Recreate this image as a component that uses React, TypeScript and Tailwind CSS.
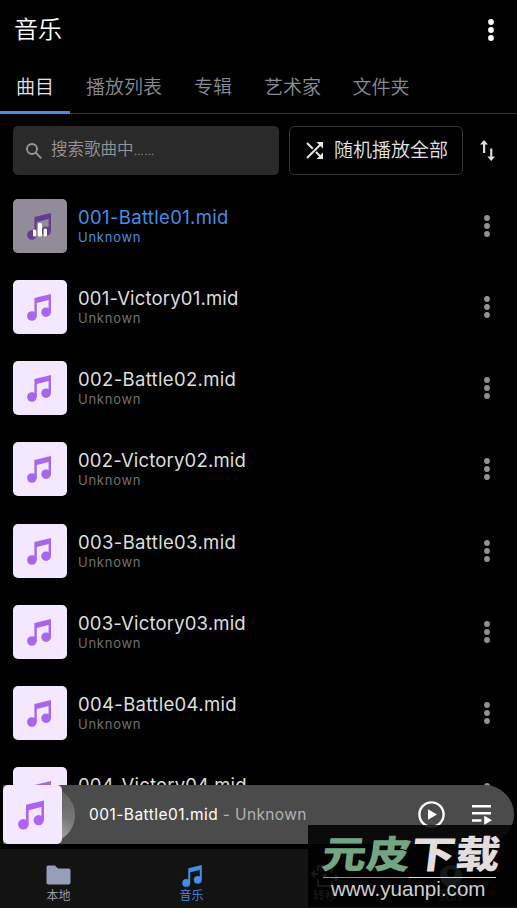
const tabs = [
  { label: "曲目", width: "w-[70px]" },
  { label: "播放列表", width: "w-[108px]" },
  { label: "专辑", width: "w-[70px]" },
  { label: "艺术家", width: "w-[89px]" },
  { label: "文件夹", width: "w-[88px]" },
];

const tracks = [
  "001-Battle01.mid",
  "001-Victory01.mid",
  "002-Battle02.mid",
  "002-Victory02.mid",
  "003-Battle03.mid",
  "003-Victory03.mid",
  "004-Battle04.mid",
  "004-Victory04.mid",
];

function Dots({ className }: { className: string }) {
  return (
    <svg className={className} viewBox="0 0 6 24" fill="currentColor">
      <circle cx="3" cy="4" r="2.9" />
      <circle cx="3" cy="12" r="2.9" />
      <circle cx="3" cy="20" r="2.9" />
    </svg>
  );
}

function Note({ className }: { className: string }) {
  return (
    <svg className={className} viewBox="0 0 24 27" fill="currentColor">
      <path d="M7.4 4 24 0V18H21.6V6L9.8 9V22.3H7.4Z" />
      <circle cx="4.9" cy="22" r="4.8" />
      <circle cx="19.1" cy="18.2" r="4.8" />
    </svg>
  );
}

function Track({ title, active }: { title: string; active: boolean }) {
  return (
    <div className="flex h-[54px] shrink-0">
      <div className="relative flex h-[54px] w-[54px] rounded-[5px] bg-[#f3e8ff] pl-[14px] pt-[14px] text-[#a866ef]">
        <Note className="h-[27px] w-6" />
        {active && (
          <div className="absolute inset-0 rounded-[5px] bg-black/40">
            <svg className="absolute left-5 top-[23.5px] h-[14px] w-[15px]" viewBox="0 0 15 14" fill="#fff">
              <rect x="0" y="6.5" width="3.4" height="7" rx="1.5" />
              <rect x="4.8" y="0" width="4.2" height="13.5" rx="1.5" />
              <rect x="10.6" y="5.5" width="3.4" height="8" rx="1.5" />
            </svg>
          </div>
        )}
      </div>
      <div className={`ml-[11px] flex-1 pt-[6px] font-['Inter'] ${active ? "text-[#448ee8]" : "text-[#dedede]"}`}>
        <div className={`text-[18.5px] leading-[25px] ${title.includes("Battle") ? "tracking-[0.34px]" : "tracking-[0.18px]"}`}>{title}</div>
        <div className={`text-[13px] leading-[15px] tracking-[0.75px] ${active ? "" : "text-[#717171]"}`}>Unknown</div>
      </div>
      <Dots className="mr-[27px] mt-[15px] h-6 w-[6px] text-[#929292]" />
    </div>
  );
}

function Player() {
  return (
    <div className="absolute left-[3px] top-[785px] flex h-[59px] w-[511px] items-center rounded-l-[5px] rounded-r-full bg-[#4b4b4b]">
      <div className="absolute left-[16px] h-[56px] w-[56px] rounded-full bg-[conic-gradient(from_40deg,#666,#777,#aaa,#888,#606060,#555,#666)]" />
      <div className="relative flex h-[59px] w-[59px] rounded-[5px] bg-[#f3e8ff] pl-[15px] pt-[15px] text-[#ae63f5]">
        <Note className="h-[30px] w-[26px]" />
      </div>
      <div className="ml-[27px] flex-1 font-['Inter'] text-[15.5px] tracking-[0.36px] text-[#b3b3b3]">
        <span className="tracking-[0.46px] text-white">001-Battle01.mid</span> - Unknown
      </div>
      <svg className="mr-[27px] h-[27px] w-[27px]" viewBox="0 0 27 27">
        <circle cx="13.5" cy="13.5" r="12.1" fill="none" stroke="#fff" strokeWidth="2.4" />
        <path d="M10 8.2 19 13.5 10 18.8Z" fill="#fff" />
      </svg>
      <svg className="mr-[22px] h-[21px] w-5" viewBox="0 0 20 21" fill="#fff">
        <path d="M0 1H19V3.6H0ZM0 8H19V10.6H0ZM0 15.2H9.5V17.8H0ZM12.2 11.8 20 16.3 12.2 20.8Z" />
      </svg>
    </div>
  );
}

function BottomNav() {
  return (
    <nav className="grid h-[59px] shrink-0 grid-cols-[117px_149px_118px_133px] bg-[#131313] text-[12px] font-[350] leading-[14px] text-[#a3a7af]">
      <div className="flex flex-col items-center pt-[16px]">
        <svg className="mb-[4px] h-5 w-[25px]" viewBox="0 0 25 20" fill="#95a0b8">
          <path d="M2 .5H9L12 3.5H22.5Q24.5 3.5 24.5 5.5V17.5Q24.5 19.5 22.5 19.5H2.5Q.5 19.5 .5 17.5V2Q.5 .5 2 .5Z" />
        </svg>
        本地
      </div>
      <div className="flex flex-col items-center pt-[16px] text-[#448ee8]">
        <Note className="mb-[2px] h-[22px] w-[22px]" />
        音乐
      </div>
      <div className="flex flex-col items-center pt-[16px]">
        <svg className="mb-[2px] h-[22px] w-7" viewBox="0 0 28 22" fill="none" stroke="currentColor" strokeWidth="2">
          <path d="M7 6V1H21V8M7 14V21H21V16M1 9H7M4 6 1 9 4 12M21 13H27M24 10 27 13 24 16" />
          <path d="M12 8 17 11 12 14Z" fill="currentColor" stroke="none" />
        </svg>
        转移
      </div>
      <div className="flex flex-col items-center pt-[16px]">
        <svg className="mb-[2px] h-[22px] w-6" viewBox="0 0 24 22">
          <circle cx="12" cy="11" r="11" fill="#95a0b8" />
          <circle cx="12" cy="8" r="4" fill="#131313" />
        </svg>
        我的
      </div>
    </nav>
  );
}

function Watermark() {
  return (
    <div className="absolute left-[308px] top-[825px] h-[82px] w-[209px] bg-black/85">
      <div className="ml-[15px] mt-[9px] w-[176px]">
        <div className="flex h-[43px] -skew-x-6 scale-y-[0.85] items-center justify-center text-[44.5px] font-black leading-[43px] text-[#e2dede]">
          <span className="text-[#72a683]">元皮</span>下载
        </div>
        <div className="h-px w-[173px] bg-[linear-gradient(90deg,#72a683_50%,#ddd_50%)]" />
        <div className="ml-2 font-['Liberation_Sans'] text-[20.6px] leading-[22px] text-[#cecece]">www.yuanpi.com</div>
      </div>
    </div>
  );
}

export default function App() {
  return (
    <main className="relative flex h-[908px] w-[517px] flex-col overflow-hidden whitespace-nowrap bg-black font-['Roboto','Noto_Sans_CJK_SC',sans-serif]">
      <header className="flex h-[60px] shrink-0 items-center justify-between pl-[14px] pr-[23px] text-white">
        <h1 className="text-[24px] font-[350] leading-[58px]">音乐</h1>
        <Dots className="h-6 w-[6px]" />
      </header>

      <nav className="flex h-[54px] shrink-0 border-b border-[#333] text-[19px] font-[350] leading-[56px] text-[#838d94]">
        {tabs.map((tab, i) => (
          <div key={tab.label} className={`${tab.width} text-center ${i === 0 ? "h-[54px] border-b-[3px] border-[#448ee8] text-[#e4e4e4]" : ""}`}>
            {tab.label}
          </div>
        ))}
      </nav>

      <div className="mt-3 flex h-[49px] shrink-0 items-center pl-[13px]">
        <div className="flex h-[49px] w-[266px] items-center rounded-[5px] bg-[#2a2a2a] pl-[13px] text-[16.5px] font-[350] text-[#969696]">
          <svg className="mr-[9px] h-4 w-4" viewBox="0 0 16 16" fill="none" stroke="currentColor" strokeWidth="1.9">
            <circle cx="6" cy="6" r="5" />
            <path d="M9.7 9.7 15.3 15.3" />
          </svg>
          搜索歌曲中……
        </div>
        <button className="ml-[10px] flex h-[49px] w-[174px] items-center rounded-[6px] border border-[#383838] pl-4 pt-px text-[19px] font-[350] text-[#e4e4e4]">
          <svg className="mb-px mr-[11px] h-[17px] w-[17px]" viewBox="0 0 17 17" fill="none" stroke="currentColor" strokeWidth="2">
            <path d="M1 1 6.8 6.8M1 16 15 2M10 10 15 15" />
            <path d="M10.5 0H17V6.5ZM10.5 17H17V10.5Z" fill="currentColor" stroke="none" />
          </svg>
          随机播放全部
        </button>
        <svg className="ml-[17px] h-[21px] w-[15px]" viewBox="0 0 15 21" fill="#dedede">
          <path d="M3 4.5H0L4 0 8 4.5H5.2V13H3ZM10.2 8.5H12.3V16.5H15L11.2 21 7.3 16.5H10.2Z" />
        </svg>
      </div>

      <div className="mt-6 flex min-h-0 flex-1 flex-col gap-[27.15px] overflow-hidden pl-[13px]">
        {tracks.map((title, i) => (
          <Track key={title} title={title} active={i === 0} />
        ))}
      </div>

      <BottomNav />
      <Player />
      <Watermark />
    </main>
  );
}
